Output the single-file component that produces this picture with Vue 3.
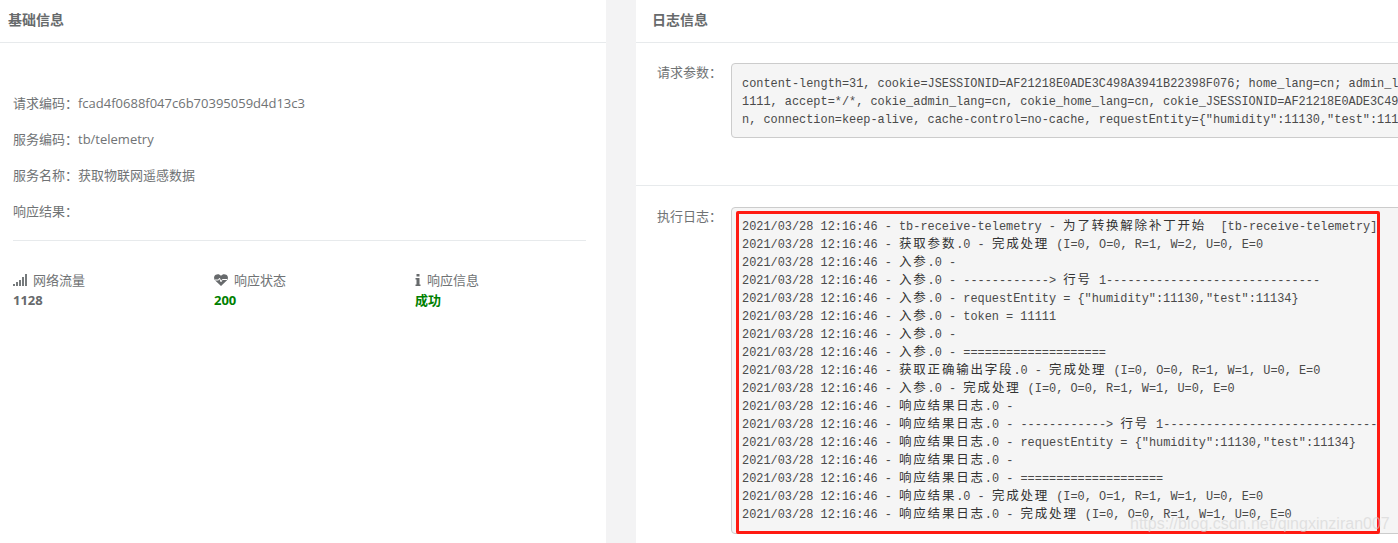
<script setup>
const infoRows = [
  ['请求编码：', 'fcad4f0688f047c6b70395059d4d13c3'],
  ['服务编码：', 'tb/telemetry'],
  ['服务名称：', '获取物联网遥感数据'],
  ['响应结果：', '']
]
const params = [
  'content-length=31, cookie=JSESSIONID=AF21218E0ADE3C498A3941B22398F076; home_lang=cn; admin_lang=cn, token=1',
  '1111, accept=*/*, cokie_admin_lang=cn, cokie_home_lang=cn, cokie_JSESSIONID=AF21218E0ADE3C498A3941B22398F076',
  'n, connection=keep-alive, cache-control=no-cache, requestEntity={"humidity":11130,"test":11134}'
]
const t = '2021/03/28 12:16:46 - '
const logs = [
  'tb-receive-telemetry - 为了转换解除补丁开始  [tb-receive-telemetry]',
  '获取参数.0 - 完成处理 (I=0, O=0, R=1, W=2, U=0, E=0',
  '入参.0 - ',
  '入参.0 - ------------> 行号 1------------------------------',
  '入参.0 - requestEntity = {"humidity":11130,"test":11134}',
  '入参.0 - token = 11111',
  '入参.0 - ',
  '入参.0 - ====================',
  '获取正确输出字段.0 - 完成处理 (I=0, O=0, R=1, W=1, U=0, E=0',
  '入参.0 - 完成处理 (I=0, O=0, R=1, W=1, U=0, E=0',
  '响应结果日志.0 - ',
  '响应结果日志.0 - ------------> 行号 1------------------------------',
  '响应结果日志.0 - requestEntity = {"humidity":11130,"test":11134}',
  '响应结果日志.0 - ',
  '响应结果日志.0 - ====================',
  '响应结果.0 - 完成处理 (I=0, O=1, R=1, W=1, U=0, E=0',
  '响应结果日志.0 - 完成处理 (I=0, O=0, R=1, W=1, U=0, E=0'
].map(l => (t + l).split(/([\u4e00-\u9fff]+)/).map(text => ({ text, cjk: /[\u4e00-\u9fff]/.test(text) })))
</script>

<template>
  <div class="page">
    <section class="panel left">
      <h5 class="title left-title">基础信息</h5>
      <div class="left-body">
        <p v-for="r in infoRows" :key="r[0]" class="info-row">{{ r[0] }}{{ r[1] }}</p>
        <hr class="rule" />
        <div class="stats">
          <div class="stat">
            <div class="stat-label">
              <svg class="ic" width="14" height="12" viewBox="0 0 14 12"><path d="M0 10h2v2H0zM3 8h2v4H3zM6 6h2v6H6zM9 3h2v9H9zM12 0h2v12h-2z" fill="#767a7c"/></svg>
              网络流量
            </div>
            <div class="stat-value">1128</div>
          </div>
          <div class="stat">
            <div class="stat-label">
              <svg class="ic" width="14" height="12" viewBox="0 0 14 12"><path d="M7 12 1.200 6.600C-.6 4.800-.2 1.800 1.800.7 3.600-.3 5.800.1 7 1.700 8.200.1 10.400-.3 12.200.7c2 1.100 2.400 4.100.6 5.900z" fill="#676a6c"/><path d="M1 6h3.500l1-1.800 1.500 3.600 1.300-2.300H13" fill="none" stroke="#fff" stroke-width="1"/></svg>
              响应状态
            </div>
            <div class="stat-value ok">200</div>
          </div>
          <div class="stat">
            <div class="stat-label">
              <svg class="ic" width="6" height="12" viewBox="0 0 5 12"><path d="M1 0h3v2.500H1zM0 4h4v6.500h1V12H0v-1.500h1V5.500H0z" fill="#676a6c"/></svg>
              响应信息
            </div>
            <div class="stat-value ok">成功</div>
          </div>
        </div>
      </div>
    </section>

    <section class="panel right">
      <h5 class="title right-title">日志信息</h5>
      <div class="form-row params-row">
        <label class="label">请求参数：</label>
        <pre class="code params"><span v-for="l in params" :key="l" class="line">{{ l }}</span></pre>
      </div>
      <div class="form-row logs-row">
        <label class="label">执行日志：</label>
        <pre class="code logs"><span v-for="(l, i) in logs" :key="i" class="line"><span v-for="(s, j) in l" :key="j" :class="{ cjk: s.cjk }">{{ s.text }}</span></span><i class="marker"></i></pre>
      </div>
    </section>
    <span class="watermark">https://blog.csdn.net/qingxinziran007</span>
  </div>
</template>

<style>
html, body { margin: 0; background: #fff; }
</style>

<style scoped>
.page {
  position: relative;
  display: flex;
  width: 1398px;
  height: 543px;
  overflow: hidden;
  background: #f3f3f4;
  color: #707375;
  font-family: "Open Sans", "Noto Sans CJK SC", sans-serif;
  font-size: 13px;
}
.panel { background: #fff; height: 543px; box-sizing: border-box; }
.left { width: 606px; flex: none; }
.right { width: 762px; margin-left: 30px; flex: none; overflow: hidden; }
.title {
  margin: 0;
  height: 42px;
  line-height: 40px;
  font-size: 14px;
  font-weight: 700;
  color: #676a6c;
  border-bottom: 1px solid #e7eaec;
  box-sizing: content-box;
}
.left-title { padding-left: 8px; }
.right-title { padding-left: 16px; }
.left-body { padding: 50px 20px 0 13px; }
.info-row { margin: 0 0 16px; height: 20px; line-height: 20px; }
.rule { border: 0; border-top: 1px solid #e7eaec; margin: 19px 0 30px; }
.stats { display: flex; }
.stat { width: 201px; flex: none; }
.stat-label { display: flex; align-items: center; gap: 6px; height: 18px; line-height: 18px; }
.ic { flex: none; }
.stat-value { font-weight: 700; height: 22px; line-height: 22px; color: #676a6c; }
.stat-value.ok { color: #008000; }
.form-row { display: flex; align-items: flex-start; }
.params-row { height: 122px; padding-top: 20px; border-bottom: 1px solid #e7eaec; box-sizing: content-box; }
.logs-row { padding-top: 21px; }
.label { width: 95px; flex: none; box-sizing: border-box; padding-right: 9px; text-align: right; line-height: 18px; }
.code {
  position: relative;
  margin: 0;
  flex: none;
  width: 800px;
  box-sizing: border-box;
  padding: 11px 10px 9px 10px;
  background: #f5f5f5;
  border: 1px solid #ccc;
  border-radius: 4px;
  font-family: "Liberation Mono", "Noto Sans CJK SC", monospace;
  font-size: 11.9px;
  line-height: 18px;
  color: #4a4a4a;
}
.params { height: 75px; }
.logs { height: 327px; padding-top: 10px; }
.line { display: block; height: 18px; white-space: pre; }
.cjk { font-size: 12.5px; letter-spacing: 1.8px; color: #333; }
.marker {
  position: absolute;
  left: 4px;
  top: 3px;
  width: 644px;
  height: 323px;
  box-sizing: border-box;
  border: 3px solid #ff1a12;
  border-radius: 2px;
}
.watermark {
  position: absolute;
  left: 1130px;
  top: 515px;
  font-family: "Liberation Sans", sans-serif;
  font-size: 16px;
  color: rgba(210, 210, 210, 0.6);
  white-space: nowrap;
}
</style>
